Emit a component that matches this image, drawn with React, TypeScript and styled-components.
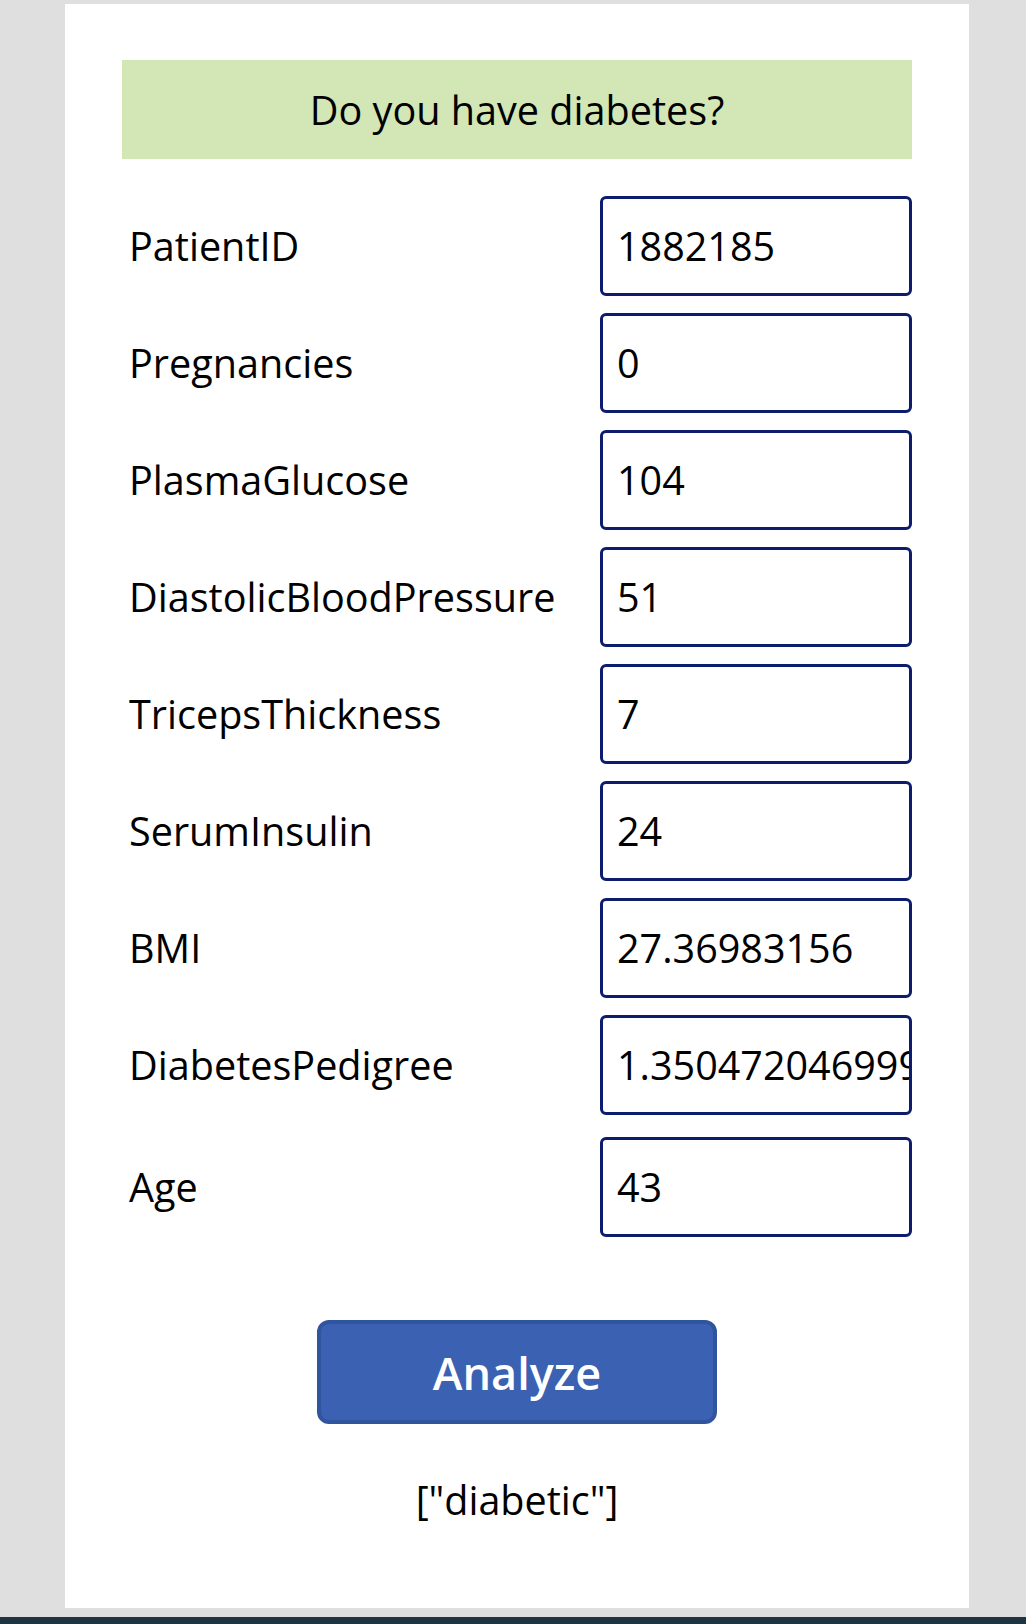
import React from "react";
import styled, { createGlobalStyle } from "styled-components";

const GlobalStyle = createGlobalStyle`
  html, body {
    margin: 0;
    padding: 0;
    background: #dfdfdf;
  }
  body {
    font-family: "Open Sans", "Noto Sans", "Liberation Sans", sans-serif;
    color: #000;
  }
`;

const Page = styled.div`
  min-height: 1624px;
  display: flex;
  flex-direction: column;
  background: #dfdfdf;
`;

const Card = styled.main`
  box-sizing: border-box;
  margin: 4px 57px 0 65px;
  height: 1604px;
  background: #ffffff;
  padding: 56px 57px 0;
  display: flex;
  flex-direction: column;
`;

const Banner = styled.h1`
  margin: 0;
  height: 99px;
  background: #d2e7b5;
  display: flex;
  align-items: center;
  justify-content: center;
  font-size: 39.6px;
  font-weight: 400;
  color: #000;
  padding-top: 1px;
  box-sizing: border-box;
`;

const Form = styled.form`
  margin-top: 37px;
  display: flex;
  flex-direction: column;
  gap: 17px;
`;

const Row = styled.label<{ $extraTop?: number }>`
  display: grid;
  grid-template-columns: 1fr 312px;
  align-items: center;
  height: 100px;
  margin-top: ${(p) => p.$extraTop ?? 0}px;
`;

const FieldName = styled.span`
  padding-left: 7px;
  font-size: 39.6px;
  color: #000;
  white-space: nowrap;
`;

const Field = styled.input`
  box-sizing: border-box;
  width: 312px;
  height: 100px;
  border: 3px solid #0d1c6c;
  border-radius: 6px;
  padding: 0 0 0 14px;
  font-family: "Open Sans", "Noto Sans", "Liberation Sans", sans-serif;
  font-size: 39.5px;
  color: #000;
  background: #fff;
  outline: none;
`;

const Actions = styled.div`
  display: flex;
  flex-direction: column;
  align-items: center;
  margin-top: 83px;
`;

const AnalyzeButton = styled.button`
  box-sizing: border-box;
  width: 400px;
  height: 104px;
  background: #3a61b2;
  border: 4px solid #30549d;
  border-radius: 12px;
  color: #fff;
  font-family: "Open Sans", "Noto Sans", "Liberation Sans", sans-serif;
  font-size: 45px;
  font-weight: 600;
  cursor: pointer;
  padding: 0;
`;

const Result = styled.div`
  margin-top: 49px;
  font-size: 39.5px;
  color: #000;
`;

const BottomBar = styled.footer`
  margin-top: auto;
  height: 7px;
  background: #1f3541;
`;

const fields: { name: string; value: string }[] = [
  { name: "PatientID", value: "1882185" },
  { name: "Pregnancies", value: "0" },
  { name: "PlasmaGlucose", value: "104" },
  { name: "DiastolicBloodPressure", value: "51" },
  { name: "TricepsThickness", value: "7" },
  { name: "SerumInsulin", value: "24" },
  { name: "BMI", value: "27.36983156" },
  { name: "DiabetesPedigree", value: "1.3504720469999999" },
  { name: "Age", value: "43" },
];

export default function App() {
  return (
    <>
      <GlobalStyle />
      <Page>
        <Card>
          <Banner>Do you have diabetes?</Banner>
          <Form onSubmit={(e) => e.preventDefault()}>
            {fields.map((f) => (
              <Row key={f.name} $extraTop={f.name === "Age" ? 5 : 0}>
                <FieldName>{f.name}</FieldName>
                <Field type="text" defaultValue={f.value} />
              </Row>
            ))}
          </Form>
          <Actions>
            <AnalyzeButton type="button">Analyze</AnalyzeButton>
            <Result>["diabetic"]</Result>
          </Actions>
        </Card>
        <BottomBar />
      </Page>
    </>
  );
}
